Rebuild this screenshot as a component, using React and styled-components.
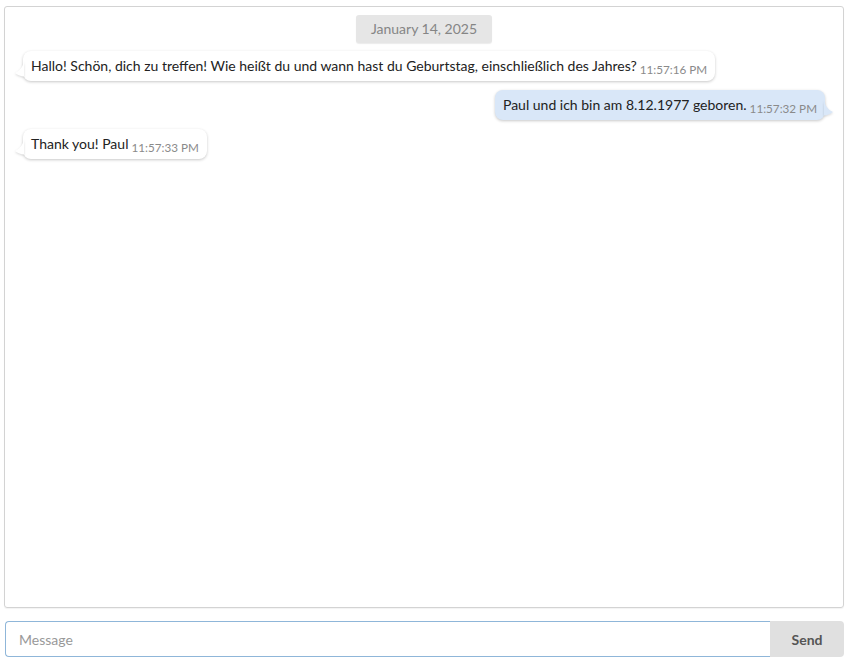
import React from 'react';
import styled, { createGlobalStyle } from 'styled-components';

const GlobalStyle = createGlobalStyle`
  html, body {
    margin: 0;
    padding: 0;
    background: #ffffff;
  }
  body {
    font-family: 'Lato', 'Noto Sans', sans-serif;
  }
`;

const MESSAGES = [
  {
    id: 1,
    side: 'in',
    text: 'Hallo! Schön, dich zu treffen! Wie heißt du und wann hast du Geburtstag, einschließlich des Jahres?',
    time: '11:57:16 PM',
  },
  {
    id: 2,
    side: 'out',
    text: 'Paul und ich bin am 8.12.1977 geboren.',
    time: '11:57:32 PM',
  },
  {
    id: 3,
    side: 'in',
    text: 'Thank you! Paul',
    time: '11:57:33 PM',
  },
];

const Tail = ({ side }) => (
  <TailSvg $side={side} width="10" height="20" viewBox="0 0 10 20" aria-hidden="true">
    {side === 'in' ? (
      <path d="M10 1 C9.5 7 6 12 1 14 C4 16 7 17.5 10 17.5 Z" />
    ) : (
      <path d="M0 1 C0.5 7 4 12 9 14 C6 16 3 17.5 0 17.5 Z" />
    )}
  </TailSvg>
);

const App = () => {
  return (
    <>
      <GlobalStyle />
      <Page>
        <ChatPanel>
          <DateRow>
            <DatePill>January 14, 2025</DatePill>
          </DateRow>
          {MESSAGES.map((m) => (
            <MessageRow key={m.id} $side={m.side}>
              <Bubble $side={m.side}>
                <Tail side={m.side} />
                {m.text}
                <Time>{m.time}</Time>
              </Bubble>
            </MessageRow>
          ))}
        </ChatPanel>
        <Composer>
          <MessageInput placeholder="Message" autoFocus />
          <SendButton type="button">Send</SendButton>
        </Composer>
      </Page>
    </>
  );
};

const Page = styled.div`
  height: 100vh;
  box-sizing: border-box;
  padding: 6px 5px 5px 4px;
  display: flex;
  flex-direction: column;
  gap: 13px;
`;

const ChatPanel = styled.div`
  flex: 1;
  border: 1px solid #d3d3d3;
  border-radius: 3px;
  padding: 8px 18px;
  display: flex;
  flex-direction: column;
  gap: 9px;
  overflow: hidden;
  box-shadow: 0 1px 1px rgba(0, 0, 0, 0.05);
`;

const DateRow = styled.div`
  display: flex;
  justify-content: center;
  margin-bottom: -1px;
`;

const DatePill = styled.div`
  background: #e6e6e6;
  color: #858585;
  font-size: 14px;
  line-height: 18px;
  padding: 5px 15px;
  border-radius: 3px;
  box-shadow: 0 1px 1px rgba(0, 0, 0, 0.08);
`;

const MessageRow = styled.div`
  display: flex;
  justify-content: ${({ $side }) => ($side === 'out' ? 'flex-end' : 'flex-start')};
`;

const Bubble = styled.div`
  position: relative;
  height: 30px;
  box-sizing: border-box;
  background: ${({ $side }) => ($side === 'out' ? '#d9e7f8' : '#ffffff')};
  color: #222;
  font-size: 14px;
  line-height: 18px;
  padding: 6px 8px;
  border-radius: 8px;
  box-shadow: 0 1px 3px rgba(0, 0, 0, 0.22);
  white-space: nowrap;
`;

const TailSvg = styled.svg`
  position: absolute;
  top: 8px;
  ${({ $side }) => ($side === 'out' ? 'right: -9px;' : 'left: -9px;')}
  fill: ${({ $side }) => ($side === 'out' ? '#d9e7f8' : '#ffffff')};
  filter: drop-shadow(0 1px 1px rgba(0, 0, 0, 0.15));
`;

const Time = styled.span`
  font-size: 11.7px;
  line-height: 12px;
  color: #8a8a8a;
  margin-left: 3px;
  position: relative;
  top: 3px;
`;

const Composer = styled.div`
  display: flex;
  height: 36px;
  padding-left: 1px;
`;

const MessageInput = styled.input`
  flex: 1;
  box-sizing: border-box;
  height: 36px;
  border: 1px solid #8fb6d9;
  border-right: none;
  border-radius: 4px 0 0 4px;
  padding: 0 12px 0 13px;
  font-family: 'Lato', 'Noto Sans', sans-serif;
  font-size: 14px;
  color: #222;
  outline: none;
  caret-color: #000;

  &::placeholder {
    color: #999;
  }
`;

const SendButton = styled.button`
  width: 74px;
  height: 36px;
  border: none;
  border-radius: 0 4px 4px 0;
  background: #e0e0e0;
  color: #555;
  font-family: 'Lato', 'Noto Sans', sans-serif;
  font-weight: 700;
  font-size: 14px;
  cursor: pointer;
`;

export default App;
